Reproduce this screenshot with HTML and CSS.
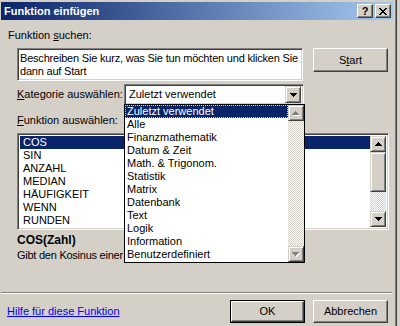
FILE: index.html
```html
<!DOCTYPE html>
<html lang="de">
<head>
<meta charset="utf-8">
<title>Funktion einfügen</title>
<link rel="stylesheet" href="styles.css">
</head>
<body>
<div class="window">
  <div class="titlebar">
    <span class="title">Funktion einfügen</span>
    <div class="tb-buttons">
      <span class="tb-btn tb-help">?</span>
      <span class="tb-btn tb-close"><svg width="8" height="7" viewBox="0 0 8 7"><path d="M0 0h2v1h1v1h2v-1h1v-1h2v1h-1v1h-1v1h-1v1h1v1h1v1h1v1h-2v-1h-1v-1h-2v1h-1v1h-2v-1h1v-1h1v-1h1v-1h-1v-1h-1v-1h-1z" fill="#000"/></svg></span>
    </div>
  </div>
  <div class="dlg">
    <div class="lbl lbl-search">Funktion <u>s</u>uchen:</div>
    <div class="search-row">
      <div class="field search-field">Beschreiben Sie kurz, was Sie tun möchten und klicken Sie<br>dann auf Start</div>
      <div class="btn btn-start">S<u>t</u>art</div>
    </div>
    <div class="cat-row">
      <span class="lbl"><u>K</u>ategorie auswählen:</span>
      <div class="combo">
        <div class="field combo-field">
          <span class="combo-text">Zuletzt verwendet</span>
          <span class="sb-btn combo-btn"><svg width="7" height="4" viewBox="0 0 7 4"><path d="M0 0h7v1h-1v1h-1v1h-1v1h-1v-1h-1v-1h-1v-1h-1z" fill="#000"/></svg></span>
        </div>
        <div class="droplist">
          <div class="drop-items">
            <div class="item sel"><span class="focus">Zuletzt verwendet</span></div>
            <div class="item">Alle</div>
            <div class="item">Finanzmathematik</div>
            <div class="item">Datum &amp; Zeit</div>
            <div class="item">Math. &amp; Trigonom.</div>
            <div class="item">Statistik</div>
            <div class="item">Matrix</div>
            <div class="item">Datenbank</div>
            <div class="item">Text</div>
            <div class="item">Logik</div>
            <div class="item">Information</div>
            <div class="item">Benutzerdefiniert</div>
          </div>
          <div class="vscroll">
            <span class="sb-btn"><svg width="8" height="5" viewBox="0 0 8 5"><path d="M3 0h1v1h1v1h1v1h1v1h-7v-1h1v-1h1v-1h1z" fill="#fff" transform="translate(1 1)"/><path d="M3 0h1v1h1v1h1v1h1v1h-7v-1h1v-1h1v-1h1z" fill="#808080"/></svg></span>
            <span class="sb-track"></span>
            <span class="sb-btn"><svg width="8" height="5" viewBox="0 0 8 5"><path d="M0 0h7v1h-1v1h-1v1h-1v1h-1v-1h-1v-1h-1v-1h-1z" fill="#fff" transform="translate(1 1)"/><path d="M0 0h7v1h-1v1h-1v1h-1v1h-1v-1h-1v-1h-1v-1h-1z" fill="#808080"/></svg></span>
          </div>
        </div>
      </div>
    </div>
    <div class="lbl lbl-fn"><u>F</u>unktion auswählen:</div>
    <div class="field listbox">
      <div class="list-items">
        <div class="item sel">COS</div>
        <div class="item">SIN</div>
        <div class="item">ANZAHL</div>
        <div class="item">MEDIAN</div>
        <div class="item">HÄUFIGKEIT</div>
        <div class="item">WENN</div>
        <div class="item">RUNDEN</div>
      </div>
      <div class="vscroll">
        <span class="sb-btn"><svg width="7" height="4" viewBox="0 0 7 4"><path d="M3 0h1v1h1v1h1v1h1v1h-7v-1h1v-1h1v-1h1z" fill="#000"/></svg></span>
        <span class="sb-thumb"></span>
        <span class="sb-track"></span>
        <span class="sb-btn"><svg width="7" height="4" viewBox="0 0 7 4"><path d="M0 0h7v1h-1v1h-1v1h-1v1h-1v-1h-1v-1h-1v-1h-1z" fill="#000"/></svg></span>
      </div>
    </div>
    <div class="sig">COS(Zahl)</div>
    <div class="desc">Gibt den Kosinus einer</div>
    <div class="sep"></div>
    <div class="footer">
      <a class="help">Hilfe für diese Funktion</a>
      <div class="btn btn-default"><span class="btn-in">OK</span></div>
      <div class="btn btn-cancel">Abbrechen</div>
    </div>
  </div>
</div>
</body>
</html>
```

FILE: styles.css
```css
* { box-sizing: border-box; margin: 0; padding: 0; }
html, body { width: 400px; height: 326px; overflow: hidden; }
body {
  background: #d4d0c8;
  font: 11px/13px "Liberation Sans", Arial, sans-serif;
  color: #000;
}
u { text-decoration: underline; text-underline-offset: 1px; }

.window {
  width: 397px;
  height: 326px;
  background: #d4d0c8;
  border-right: 1px solid #404040;
  box-shadow: inset -1px 0 #808080;
  padding: 2px 0 0 1px;
}

.titlebar {
  height: 18px;
  margin-right: 3px;
  background: linear-gradient(90deg, #0a246a, #a6caf0);
  display: flex;
  align-items: center;
  justify-content: space-between;
  padding: 0 2px 0 3px;
}
.title { color: #fff; font-weight: bold; font-size: 11px; }
.tb-buttons { display: flex; gap: 2px; }
.tb-btn {
  width: 16px; height: 14px;
  background: #d4d0c8;
  border: 1px solid; border-color: #fff #404040 #404040 #fff;
  box-shadow: inset -1px -1px #808080;
  display: flex; align-items: center; justify-content: center;
  font-weight: bold; font-size: 11px; line-height: 12px;
}

.dlg { padding: 9px 0 0 0; }
.lbl-search { padding-left: 7px; height: 13px; }

.search-row { display: flex; align-items: flex-start; margin-top: 6px; padding-left: 16px; }
.field {
  background: #fff;
  border: 1px solid; border-color: #808080 #fff #fff #808080;
  box-shadow: inset 1px 1px #404040, inset -1px -1px #d4d0c8;
}
.search-field { width: 286px; height: 33px; padding: 3px 2px; white-space: nowrap; letter-spacing: -0.2px; }

.btn {
  background: #d4d0c8;
  border: 1px solid; border-color: #fff #404040 #404040 #fff;
  box-shadow: inset -1px -1px #808080;
  display: flex; align-items: center; justify-content: center;
  width: 75px; height: 24px;
}
.btn-start { margin-left: 10px; }

.cat-row { display: flex; align-items: center; margin-top: 3px; padding-left: 16px; height: 21px; }
.cat-row .lbl { width: 107px; }
.combo { position: relative; }
.combo-field { width: 180px; height: 21px; display: flex; align-items: center; justify-content: space-between; padding: 2px 2px 2px 4px; }
.sb-btn {
  width: 16px; height: 16px;
  background: #d4d0c8;
  border: 1px solid; border-color: #d4d0c8 #404040 #404040 #d4d0c8;
  box-shadow: inset 1px 1px #fff, inset -1px -1px #808080;
  display: flex; align-items: center; justify-content: center;
  flex: none;
}
.combo-btn { height: 17px; }

.droplist {
  position: absolute; left: 0; top: 20px;
  width: 181px; height: 159px;
  background: #fff;
  border: 1px solid #000;
  display: flex;
}
.drop-items { flex: 1; }
.item { height: 13px; padding-left: 2px; white-space: nowrap; }
.item.sel { background: #0a246a; color: #fff; }
.droplist .item.sel { padding-left: 0; }
.focus { display: block; height: 13px; outline: 1px dotted #d4d0c8; outline-offset: -1px; padding-left: 2px; }

.vscroll { display: flex; flex-direction: column; width: 16px; flex: none; }
.sb-track {
  flex: 1;
  background: repeating-conic-gradient(#d4d0c8 0 25%, #fff 0 50%) 0 0 / 2px 2px;
}
.sb-thumb {
  height: 40px; flex: none;
  background: #d4d0c8;
  border: 1px solid; border-color: #d4d0c8 #404040 #404040 #d4d0c8;
  box-shadow: inset 1px 1px #fff, inset -1px -1px #808080;
}

.lbl-fn { padding-left: 16px; margin-top: 9px; height: 13px; }
.listbox { margin: 6px 0 0 16px; width: 372px; height: 97px; display: flex; padding: 2px; }
.list-items { flex: 1; }
.listbox .item { padding-left: 3px; }

.sig { font-weight: bold; padding-left: 16px; margin-top: 4px; height: 13px; font-size: 12px; }
.desc { padding-left: 16px; margin-top: 2px; height: 13px; white-space: nowrap; letter-spacing: -0.25px; }

.sep { margin-top: 30px; height: 2px; border-top: 1px solid #808080; border-bottom: 1px solid #fff; margin-right: 4px; }

.footer { display: flex; align-items: center; padding: 6px 0 0 6px; }
.help { color: #0000ff; text-decoration: underline; }
.btn-default { margin-left: auto; width: 75px; height: 23px; border: 1px solid #000; box-shadow: none; padding: 0; }
.btn-in {
  width: 100%; height: 100%;
  display: flex; align-items: center; justify-content: center;
  border: 1px solid; border-color: #fff #404040 #404040 #fff;
  box-shadow: inset -1px -1px #808080;
}
.btn-cancel { margin-left: 8px; margin-right: 8px; height: 23px; }
```
